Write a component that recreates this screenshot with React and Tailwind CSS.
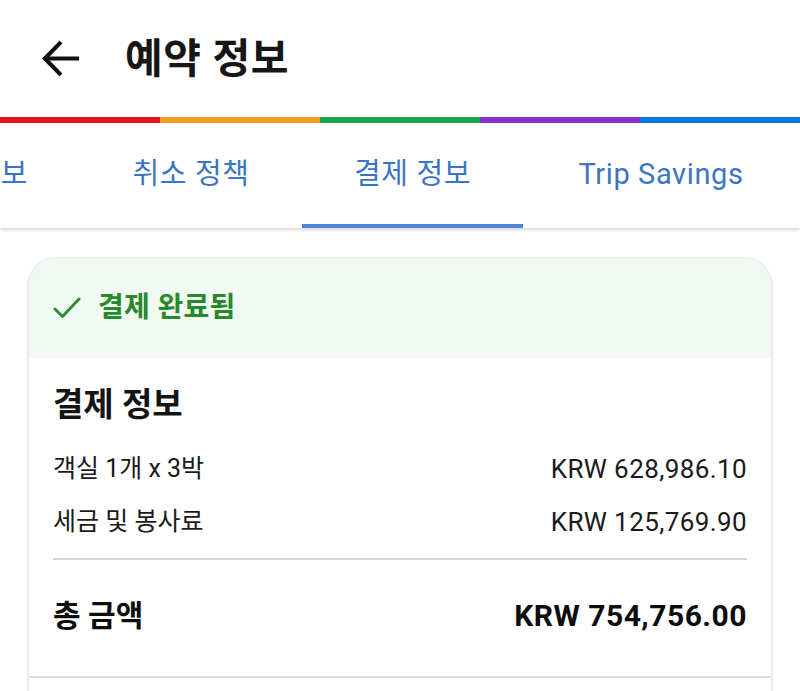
import React from "react";

const FONT = { fontFamily: "Roboto, 'Noto Sans CJK KR', 'Noto Sans', sans-serif" };

function BackArrow() {
  return (
    <svg width="40" height="38" viewBox="0 0 40 38" className="block">
      <path d="M2 18.5 H37" stroke="#111" strokeWidth="4" fill="none" />
      <path d="M19 2 L2.8 18.5 L19 35" stroke="#111" strokeWidth="4" fill="none" strokeLinejoin="miter" />
    </svg>
  );
}

function Check() {
  return (
    <svg width="28" height="24" viewBox="0 0 28 24" className="block">
      <path d="M2 13 L9.5 20.5 L26 3" stroke="#2a8f35" strokeWidth="3" fill="none" strokeLinecap="round" strokeLinejoin="round" />
    </svg>
  );
}

export default function App() {
  return (
    <div className="w-[800px] h-[691px] overflow-hidden bg-white" style={FONT}>
      {/* Header */}
      <div className="h-[117px] flex items-center pl-[42px]">
        <BackArrow />
        <div className="ml-[43px] text-[41px] tracking-[0.6px] font-bold text-[#161616] leading-none mt-[2px]">예약 정보</div>
      </div>

      {/* Color bar */}
      <div className="flex h-[6px]">
        <div className="w-[160px] bg-[#e8141c]" />
        <div className="w-[160px] bg-[#ef9c22]" />
        <div className="w-[160px] bg-[#1ca24f]" />
        <div className="w-[160px] bg-[#8b33cc]" />
        <div className="w-[160px] bg-[#0c78d8]" />
      </div>

      {/* Tabs */}
      <div className="relative h-[105px] bg-white shadow-[0_2px_3px_rgba(0,0,0,0.16)] overflow-hidden">
        <div className="flex h-full ml-[-141px] text-[29px] tracking-[0.6px] text-[#3b74c6] whitespace-nowrap">
          <div className="w-[221px] flex items-center justify-center pb-[1px]">예약 정보</div>
          <div className="w-[222px] flex items-center justify-center pb-[1px]">취소 정책</div>
          <div className="w-[221px] flex items-center justify-center relative pb-[1px]">
            결제 정보
            <div className="absolute bottom-0 left-0 right-0 h-[4px] bg-[#4e86d6]" />
          </div>
          <div className="w-[276px] flex items-center justify-center pb-[1px]">Trip Savings</div>
        </div>
      </div>

      {/* Card */}
      <div className="mx-[27px] mt-[29px] rounded-t-[30px] border-x-2 border-t border-[#ececec] overflow-hidden shadow-[0_0_3px_rgba(0,0,0,0.05)]">
        <div className="h-[100px] bg-[#f2f8f2] flex items-center pl-[24px]">
          <Check />
          <div className="ml-[17px] text-[28px] tracking-[0.3px] font-bold text-[#268a2c] leading-none">결제 완료됨</div>
        </div>
        <div className="bg-white">
          <div className="h-[84px] pt-[8px] px-[24px] flex items-center text-[33px] font-bold text-[#141414] leading-none">
            결제 정보
          </div>
          <div className="px-[24px] text-[25px] text-[#1a1a1a] leading-none">
            <div className="h-[53px] flex items-center justify-between">
              <span>객실 1개 x 3박</span>
              <span className="text-[26px] tracking-[0.4px]">KRW 628,986.10</span>
            </div>
            <div className="h-[53px] flex items-center justify-between">
              <span>세금 및 봉사료</span>
              <span className="text-[26px] tracking-[0.4px]">KRW 125,769.90</span>
            </div>
          </div>
          <div className="mx-[24px] mt-[10px] h-[2px] bg-[#d6d6d6]" />
          <div className="h-[116px] pb-[4px] px-[24px] flex items-center justify-between text-[30px] font-bold text-[#0d0d0d] leading-none">
            <span>총 금액</span>
            <span className="tracking-[0.5px]">KRW 754,756.00</span>
          </div>
          <div className="h-[2px] bg-[#dcdcdc]" />
          <div className="h-[40px]" />
        </div>
      </div>
    </div>
  );
}
